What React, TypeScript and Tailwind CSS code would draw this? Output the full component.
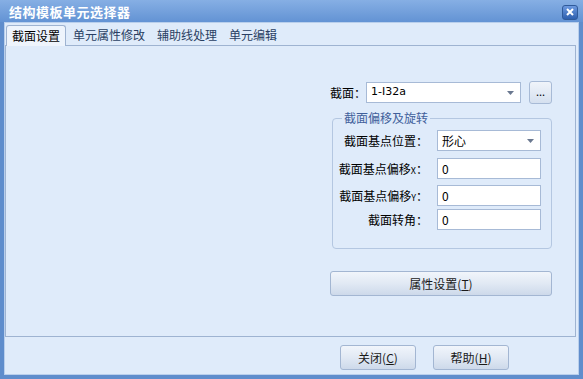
import React from "react";

const font = { fontFamily: '"Noto Sans CJK SC", "Liberation Sans", sans-serif' };

function Arrow() {
  return (
    <svg width="7" height="4" viewBox="0 0 7 4" className="shrink-0">
      <path d="M0 0h7L3.5 4z" fill="#6a7890" />
    </svg>
  );
}

function Btn({ children, className }: { children: React.ReactNode; className: string }) {
  return (
    <div
      className={`flex items-center justify-center rounded-[3px] border border-[#a3b6d2] bg-gradient-to-b from-[#f1f5fb] via-[#e1e9f4] to-[#cdd9ea] text-[12px] text-[#1a1a1a] ${className}`}
    >
      {children}
    </div>
  );
}

export default function App() {
  return (
    <div className="w-[583px] h-[379px] bg-[#5f8dcc] flex flex-col overflow-hidden" style={font}>
      {/* title bar */}
      <div className="h-[22px] flex items-center justify-between pl-[9px] pr-[5px] bg-gradient-to-b from-[#86afe4] to-[#6393d4]">
        <span className="text-white text-[13px] font-bold leading-none tracking-[0.5px]">结构模板单元选择器</span>
        <div className="w-[16px] h-[15px] mt-[2px] rounded-[3px] border border-[#2f5a9a] bg-gradient-to-b from-[#6d9ae0] to-[#2e5fae] flex items-center justify-center">
          <svg width="8" height="8" viewBox="0 0 8 8">
            <path d="M1 1l6 6M7 1l-6 6" stroke="white" strokeWidth="2" />
          </svg>
        </div>
      </div>
      {/* body */}
      <div className="flex-1 mx-[4px] mb-[4px] bg-[#dfebfa] border border-[#b9cfec] flex flex-col">
        {/* tabs */}
        <div className="h-[21px] mt-[1px] flex items-end pl-[1px] text-[12px] text-[#2a3f63]">
          <div className="h-[21px] px-[5px] flex items-center bg-[#eef4fc] border border-b-0 border-[#9eb3d1] rounded-t-[3px] text-black relative top-[1px] z-10">
            截面设置
          </div>
          <div className="h-[20px] px-[7px] flex items-center">单元属性修改</div>
          <div className="h-[20px] px-[5px] flex items-center">辅助线处理</div>
          <div className="h-[20px] px-[7px] flex items-center">单元编辑</div>
        </div>
        {/* panel */}
        <div className="h-[292px] mr-[2px] border border-[#9eb3d1] bg-[#dfebfa] flex justify-end pr-[23px] pt-[35px]">
          <div className="w-[222px] flex flex-col text-[12px] text-black">
            <div className="flex items-center h-[23px]">
              <span className="w-[36px]">截面：</span>
              <div className="w-[155px] h-[21px] bg-white border border-[#a7bad6] flex items-center justify-between pl-[4px] pr-[6px]">
                <span className="text-[11px]" style={{ fontFamily: '"DejaVu Sans", sans-serif' }}>1-I32a</span>
                <Arrow />
              </div>
              <div className="ml-[8px] w-[23px] h-[23px] rounded-[3px] border border-[#a7bad6] bg-gradient-to-b from-[#f0f4fa] to-[#d5e0ef] flex items-center justify-center text-[11px] leading-none pb-[2px]">
                ...
              </div>
            </div>
            {/* group box */}
            <div className="relative mt-[14px] ml-[2px] h-[131px] border border-[#b4c7e1] rounded-[4px] pt-[11px]">
              <span className="absolute -top-[10px] left-[9px] px-[2px] bg-[#dfebfa] text-[#41609a] leading-[18px]">截面偏移及旋转</span>
              <div className="flex items-center h-[21px]">
                <span className="w-[104px] text-right pr-[9px]">截面基点位置：</span>
                <div className="w-[104px] h-[21px] bg-white border border-[#a7bad6] flex items-center justify-between pl-[4px] pr-[6px]">
                  <span>形心</span>
                  <Arrow />
                </div>
              </div>
              <div className="flex items-center h-[21px] mt-[7px]">
                <span className="w-[104px] text-right pr-[9px]">截面基点偏移<span className="text-[9px]">X</span>：</span>
                <div className="w-[104px] h-[21px] bg-white border border-[#a7bad6] flex items-center pl-[4px]">0</div>
              </div>
              <div className="flex items-center h-[21px] mt-[6px]">
                <span className="w-[104px] text-right pr-[9px]">截面基点偏移<span className="text-[9px]">Y</span>：</span>
                <div className="w-[104px] h-[21px] bg-white border border-[#a7bad6] flex items-center pl-[4px]">0</div>
              </div>
              <div className="flex items-center h-[21px] mt-[3px]">
                <span className="w-[104px] text-right pr-[9px]">截面转角：</span>
                <div className="w-[104px] h-[21px] bg-white border border-[#a7bad6] flex items-center pl-[4px]">0</div>
              </div>
            </div>
            <Btn className="mt-[22px] w-[222px] h-[25px]">属性设置(<span className="underline">T</span>)</Btn>
          </div>
        </div>
        {/* footer */}
        <div className="flex-1 flex items-start pt-[8px] pl-[335px] gap-[17px]">
          <Btn className="w-[76px] h-[25px]">关闭(<span className="underline">C</span>)</Btn>
          <Btn className="w-[76px] h-[25px]">帮助(<span className="underline">H</span>)</Btn>
        </div>
      </div>
    </div>
  );
}
